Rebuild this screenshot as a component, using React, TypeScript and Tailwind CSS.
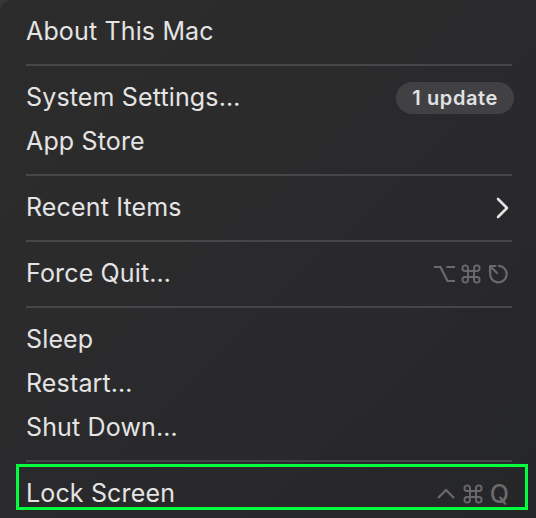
import React from 'react';

const font = { fontFamily: 'Inter, "Noto Sans", sans-serif' };

const Cmd = () => (
  <svg width="20" height="20" viewBox="0 0 20 20" fill="none" stroke="currentColor" strokeWidth="1.9">
    <path d="M7 7h6v6H7z M7 7V4.2A2.8 2.8 0 1 0 4.2 7H7 M13 7V4.2A2.8 2.8 0 1 1 15.8 7H13 M7 13v2.8A2.8 2.8 0 1 1 4.2 13H7 M13 13v2.8a2.8 2.8 0 1 0 2.8-2.8H13" />
  </svg>
);

const Option = () => (
  <svg width="21" height="20" viewBox="0 0 21 20" fill="none" stroke="currentColor" strokeWidth="2.2">
    <path d="M0 3h6.5l7 14H21 M12.5 3H21" />
  </svg>
);

const Escape = () => (
  <svg width="22" height="22" viewBox="0 0 22 22" fill="none" stroke="currentColor" strokeWidth="2.2" strokeLinecap="round">
    <path d="M12 2.8a8.3 8.3 0 1 1-8.6 6" />
    <path d="M3 3l7 7 M3 3h5.5 M3 3v5.5" />
  </svg>
);

const Ctrl = () => (
  <svg width="20" height="20" viewBox="0 0 20 20" fill="none" stroke="currentColor" strokeWidth="2.2">
    <path d="M2 14l8-8 8 8" />
  </svg>
);

const Chevron = () => (
  <svg width="14" height="22" viewBox="0 0 14 22" fill="none" stroke="currentColor" strokeWidth="2.6" strokeLinecap="round" strokeLinejoin="round">
    <path d="M2 2l9 9-9 9" />
  </svg>
);

const Row = ({ label, right }: { label: string; right?: React.ReactNode }) => (
  <div className="h-[44px] flex items-center justify-between px-[26px]">
    <span className="text-[25px] text-[#e4e4e4] tracking-[0.15px]">{label}</span>
    {right}
  </div>
);

const Sep = () => (
  <div className="h-[22px] flex items-center pl-[26px] pr-[24px]">
    <div className="h-[2px] w-full bg-[#464648]" />
  </div>
);

export default function App() {
  return (
    <div className="w-[536px] h-[518px] bg-[#3a3633] overflow-hidden" style={font}>
      <div className="relative w-[536px] h-[530px] rounded-tl-[12px] bg-gradient-to-br from-[#2d2c2c] via-[#2a2a2c] to-[#252628] pt-[10px]">
        <Row label="About This Mac" />
        <Sep />
        <Row
          label="System Settings…"
          right={
            <span className="h-[32px] px-[16px] mr-[-4px] rounded-full bg-[#414143] text-[#e2e2e2] text-[20px] font-semibold tracking-[0.6px] flex items-center">
              1 update
            </span>
          }
        />
        <Row label="App Store" />
        <Sep />
        <Row label="Recent Items" right={<span className="text-[#e4e4e4]"><Chevron /></span>} />
        <Sep />
        <Row
          label="Force Quit…"
          right={
            <span className="flex items-center gap-[6px] text-[#6a6a6c] mr-[1px]">
              <Option />
              <Cmd />
              <Escape />
            </span>
          }
        />
        <Sep />
        <Row label="Sleep" />
        <Row label="Restart…" />
        <Row label="Shut Down…" />
        <Sep />
        <Row
          label="Lock Screen"
          right={
            <span className="flex items-center gap-[7px] text-[#6a6a6c] mr-[1px]">
              <Ctrl />
              <Cmd />
              <span className="text-[25px] font-medium leading-none">Q</span>
            </span>
          }
        />
        <div className="absolute left-[16px] top-[464px] w-[512px] h-[46px] border-[3px] border-[#00ff3c]" />
      </div>
    </div>
  );
}
